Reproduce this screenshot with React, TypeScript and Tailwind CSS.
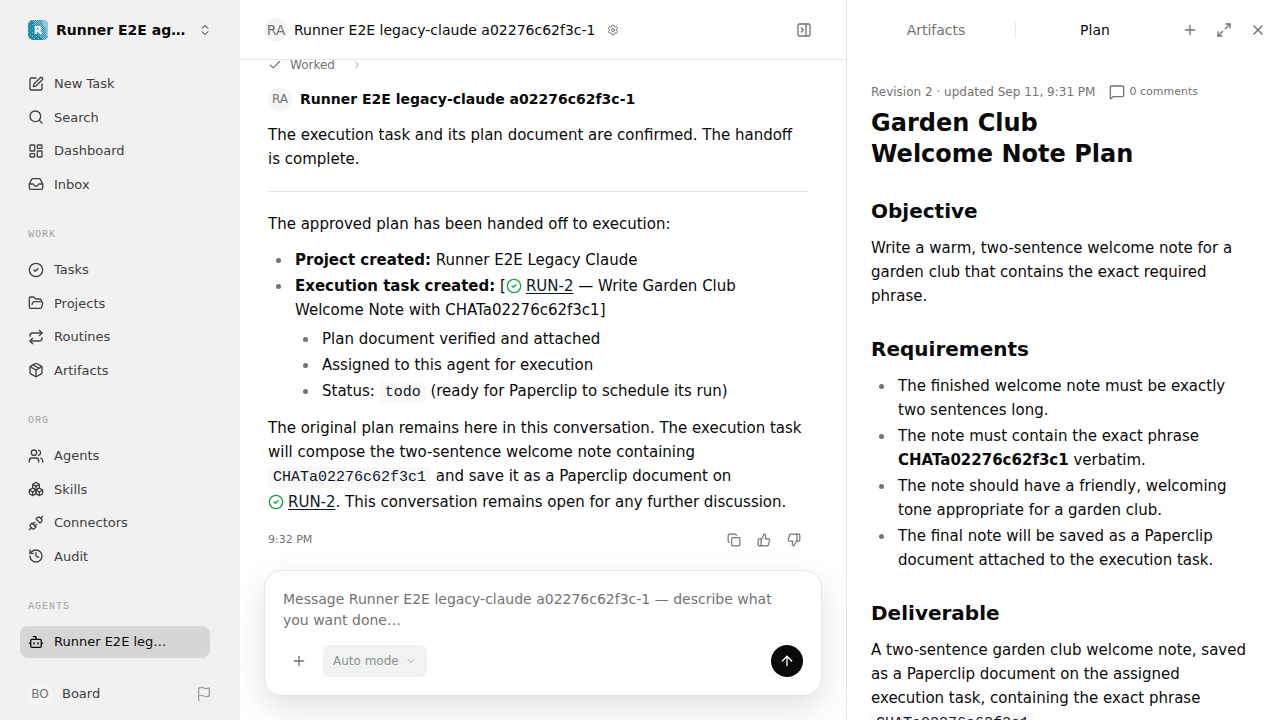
// src/pages/AgentChat.tsx
import React, { useState } from "react";
import {
  ArrowUp,
  Bot,
  Boxes,
  Check,
  ChevronDown,
  ChevronRight,
  ChevronsUpDown,
  CircleCheck,
  Copy,
  Flag,
  FolderOpen,
  History,
  Inbox,
  LayoutDashboard,
  Maximize2,
  MessageSquare,
  Package,
  PanelRightClose,
  Plus,
  Repeat,
  Search,
  Settings,
  SquarePen,
  ThumbsDown,
  ThumbsUp,
  Unplug,
  Users,
  X,
  type LucideIcon,
} from "lucide-react";

type NavItem = { label: string; icon: LucideIcon; active?: boolean };
type NavSection = { title?: string; items: NavItem[] };

const AGENT = "Runner E2E legacy-claude a02276c62f3c-1";

const SECTIONS: NavSection[] = [
  {
    items: [
      { label: "New Task", icon: SquarePen },
      { label: "Search", icon: Search },
      { label: "Dashboard", icon: LayoutDashboard },
      { label: "Inbox", icon: Inbox },
    ],
  },
  {
    title: "Work",
    items: [
      { label: "Tasks", icon: CircleCheck },
      { label: "Projects", icon: FolderOpen },
      { label: "Routines", icon: Repeat },
      { label: "Artifacts", icon: Package },
    ],
  },
  {
    title: "Org",
    items: [
      { label: "Agents", icon: Users },
      { label: "Skills", icon: Boxes },
      { label: "Connectors", icon: Unplug },
      { label: "Audit", icon: History },
    ],
  },
  {
    title: "Agents",
    items: [{ label: AGENT, icon: Bot, active: true }],
  },
];

function Logo() {
  return (
    <svg viewBox="0 0 20 20" className="size-5 shrink-0 rounded-[5px]" aria-hidden="true">
      <defs>
        <pattern id="dither" width="2" height="2" patternUnits="userSpaceOnUse">
          <rect width="1" height="1" fill="#8fc9de" />
          <rect x="1" y="1" width="1" height="1" fill="#8fc9de" />
        </pattern>
        <pattern id="dots" width="4" height="4" patternUnits="userSpaceOnUse">
          <rect width="1" height="1" fill="#8fc9de" />
          <rect x="2" y="2" width="1" height="1" fill="#8fc9de" />
        </pattern>
      </defs>
      <rect width="20" height="20" fill="#1f86a3" />
      <rect width="20" height="20" fill="url(#dots)" />
      <path d="M5 0h15v20H15L11 15L7 8Z" fill="url(#dither)" />
      <path d="M14 0h6v16h-2V9L15 5Z" fill="#8fc9de" />
      <text
        x="10"
        y="14"
        textAnchor="middle"
        className="fill-white font-['DejaVu_Sans',sans-serif] text-[11px] font-bold"
      >
        R
      </text>
    </svg>
  );
}

function Avatar({ initials, large }: { initials: string; large?: boolean }) {
  return (
    <span
      className={`flex size-6 shrink-0 items-center justify-center rounded-full bg-neutral-100 text-neutral-500 ${
        large ? "text-sm" : "text-xs"
      }`}
    >
      {initials}
    </span>
  );
}

function IconButton({ label, children }: { label: string; children: React.ReactNode }) {
  return (
    <button
      aria-label={label}
      type="button"
      className="flex size-8 shrink-0 items-center justify-center rounded-md text-neutral-500 hover:bg-neutral-100"
    >
      {children}
    </button>
  );
}

function Code({ children }: { children: React.ReactNode }) {
  return (
    <code className="rounded-[3px] bg-[#f8f8f8] px-[5px] py-[2px] font-['Liberation_Mono',monospace] text-[15px] text-slate-900">
      {children}
    </code>
  );
}

function TaskLink() {
  return (
    <a href="#run-2" className="whitespace-nowrap text-slate-900">
      <CircleCheck className="mr-1 inline size-4 align-[-3px] text-[#16a34a]" />
      <span className="underline underline-offset-2">RUN-2</span>
    </a>
  );
}

function Sidebar() {
  return (
    <aside className="flex w-60 shrink-0 flex-col bg-[#f1f1f1] text-[13px] leading-normal">
      <button className="flex h-15 shrink-0 items-center gap-2 px-7 text-left">
        <Logo />
        <span className="min-w-0 flex-1 truncate text-sm font-bold">Runner E2E agents</span>
        <ChevronsUpDown className="size-3.5 shrink-0 text-neutral-500" />
      </button>

      <nav className="flex min-h-0 flex-1 flex-col gap-5 overflow-hidden pt-2 pr-[30px] pl-5">
        {SECTIONS.map((section, i) => (
          <div key={i}>
            {section.title && (
              <h2 className="mb-1.5 flex h-7 items-center px-2 font-['Liberation_Mono',monospace] text-[10px] tracking-widest text-neutral-400 uppercase">
                {section.title}
              </h2>
            )}
            <ul className="flex flex-col gap-0.5">
              {section.items.map(({ label, icon: Icon, active }) => (
                <li key={label}>
                  <a
                    href="#"
                    className={
                      active
                        ? "flex items-center gap-2.5 rounded-lg bg-[#d6d6d6] py-1.5 pr-10 pl-2 text-neutral-950"
                        : "flex items-center gap-2.5 rounded-lg px-2 py-1.5 text-neutral-700"
                    }
                  >
                    <Icon className="size-4 shrink-0" />
                    <span className="truncate">{label}</span>
                  </a>
                </li>
              ))}
            </ul>
          </div>
        ))}
      </nav>

      <div className="flex shrink-0 items-center gap-2.5 pt-2 pr-7 pb-3.5 pl-7 text-neutral-700">
        <Avatar initials="BO" />
        <span className="flex-1">Board</span>
        <button aria-label="Send feedback" className="text-neutral-400">
          <Flag className="size-4" />
        </button>
      </div>
    </aside>
  );
}

function Message() {
  return (
    <article className="text-[15px] leading-6">
      <button className="flex items-center gap-2 text-xs leading-5 text-neutral-500">
        <Check className="size-3.5" />
        Worked
        <ChevronRight className="ml-2 size-3 text-neutral-400" />
      </button>

      <div className="mt-3 flex items-center gap-2">
        <Avatar initials="RA" />
        <span className="text-sm font-bold">{AGENT}</span>
      </div>

      <p className="mt-3">
        The execution task and its plan document are confirmed. The handoff is complete.
      </p>
      <hr className="my-5 border-neutral-200" />
      <p>The approved plan has been handed off to execution:</p>

      <ul className="mt-3 list-disc space-y-0.5 pl-6 marker:text-neutral-500">
        <li className="pl-[3px]">
          <strong>Project created:</strong> Runner E2E Legacy Claude
        </li>
        <li className="pl-[3px]">
          <strong>Execution task created:</strong> [<TaskLink /> — Write Garden Club Welcome Note
          with CHATa02276c62f3c1]
          <ul className="mt-[5px] list-disc space-y-0.5 pl-6">
            <li className="pl-[3px]">Plan document verified and attached</li>
            <li className="pl-[3px]">Assigned to this agent for execution</li>
            <li className="pl-[3px]">
              Status: <Code>todo</Code> (ready for Paperclip to schedule its run)
            </li>
          </ul>
        </li>
      </ul>

      <p className="mt-[11px]">
        The original plan remains here in this conversation. The execution task will compose the
        two-sentence welcome note containing <Code>CHATa02276c62f3c1</Code> and save it as a
        Paperclip document on <TaskLink />. This conversation remains open for any further
        discussion.
      </p>

      <div className="mt-3.5 flex items-center justify-between text-neutral-500">
        <time className="text-[11px]">9:32 PM</time>
        <div className="flex gap-4 pr-[7px]">
          <button aria-label="Copy">
            <Copy className="size-3.5" />
          </button>
          <button aria-label="Good response">
            <ThumbsUp className="size-3.5" />
          </button>
          <button aria-label="Bad response">
            <ThumbsDown className="size-3.5" />
          </button>
        </div>
      </div>
    </article>
  );
}

function Composer() {
  const [draft, setDraft] = useState("");

  return (
    <form
      className="mx-6 mb-6 shrink-0 rounded-[18px] border border-neutral-200 bg-white p-[18px] shadow-[0_12px_32px_rgba(0,0,0,0.12)]"
      onSubmit={(e) => e.preventDefault()}
    >
      <textarea
        aria-label="Message"
        rows={2}
        value={draft}
        onChange={(e) => setDraft(e.target.value)}
        placeholder={`Message ${AGENT} — describe what you want done…`}
        className="block w-full resize-none pr-2 text-sm leading-[21px] outline-none placeholder:text-neutral-500"
      />
      <div className="mt-3.5 flex items-center gap-2">
        <IconButton label="Attach">
          <Plus className="size-4" />
        </IconButton>
        <div className="relative">
          <select
            aria-label="Mode"
            className="h-8 appearance-none rounded-md bg-[#f1f3f2] pr-7 pl-2.5 text-xs text-[#8f9190]"
          >
            <option>Auto mode</option>
          </select>
          <ChevronDown className="pointer-events-none absolute top-2.5 right-2.5 size-3 text-neutral-400" />
        </div>
        <button
          type="submit"
          aria-label="Send"
          className="ml-auto flex size-8 items-center justify-center rounded-full bg-neutral-950 text-white"
        >
          <ArrowUp className="size-4" />
        </button>
      </div>
    </form>
  );
}

function PlanPanel() {
  const heading = "mt-[27px] mb-[11px] text-xl leading-7 font-bold";

  return (
    <aside className="flex w-[434px] shrink-0 flex-col border-l border-neutral-200">
      <div className="flex h-15 shrink-0 items-center pr-1.5 pl-2.5">
        <div role="tablist" className="flex flex-1 items-center text-sm">
          <button role="tab" aria-selected="false" className="flex-1 text-neutral-500">
            Artifacts
          </button>
          <span className="h-4 w-px bg-neutral-200" />
          <button role="tab" aria-selected="true" className="flex-1">
            Plan
          </button>
        </div>
        <div className="flex gap-0.5">
          <IconButton label="New tab">
            <Plus className="size-4" />
          </IconButton>
          <IconButton label="Expand">
            <Maximize2 className="size-4" />
          </IconButton>
          <IconButton label="Close">
            <X className="size-4" />
          </IconButton>
        </div>
      </div>

      <div className="min-h-0 flex-1 overflow-hidden px-6 pt-5 text-[15px] leading-6">
        <div className="flex items-center gap-3.5 text-xs leading-6 text-neutral-500">
          Revision 2 · updated Sep 11, 9:31 PM
          <button className="flex items-center gap-1 text-[11px]">
            <MessageSquare className="size-4" />0 comments
          </button>
        </div>
        <h1 className="mt-1 text-2xl leading-[31px] font-bold">
          Garden Club
          <br />
          Welcome Note Plan
        </h1>

        <h2 className={heading}>Objective</h2>
        <p>
          Write a warm, two-sentence welcome note for a garden club that contains the exact
          required phrase.
        </p>

        <h2 className={heading}>Requirements</h2>
        <ul className="list-disc space-y-0.5 pl-6 marker:text-neutral-500">
          <li className="pl-[3px]">The finished welcome note must be exactly two sentences long.</li>
          <li className="pl-[3px]">
            The note must contain the exact phrase <strong>CHATa02276c62f3c1</strong> verbatim.
          </li>
          <li className="pl-[3px]">
            The note should have a friendly, welcoming tone appropriate for a garden club.
          </li>
          <li className="pl-[3px]">
            The final note will be saved as a Paperclip document attached to the execution task.
          </li>
        </ul>

        <h2 className={heading}>Deliverable</h2>
        <p>
          A two-sentence garden club welcome note, saved as a Paperclip document on the assigned
          execution task, containing the exact phrase <Code>CHATa02276c62f3c1</Code>.
        </p>
      </div>
    </aside>
  );
}

export default function App() {
  return (
    <div className="flex h-screen overflow-hidden bg-white font-['DejaVu_Sans',sans-serif] text-neutral-950">
      <Sidebar />

      <main className="flex min-w-0 flex-1 flex-col">
        <header className="flex h-15 shrink-0 items-center border-b border-neutral-200 px-6">
          <Avatar initials="RA" large />
          <h1 className="ml-1.5 truncate text-sm">{AGENT}</h1>
          <button aria-label="Agent settings" className="ml-3 text-neutral-500">
            <Settings className="size-3" />
          </button>
          <button
            aria-label="Close panel"
            className="ml-auto flex size-9 items-center justify-center rounded-md text-neutral-500 hover:bg-neutral-100"
          >
            <PanelRightClose className="size-4" />
          </button>
        </header>

        {/* Thread sticks to its newest message, older rows run under the header */}
        <div className="flex min-h-0 flex-1 flex-col justify-end overflow-hidden pr-[38px] pb-[18px] pl-7">
          <Message />
        </div>

        <Composer />
      </main>

      <PlanPanel />
    </div>
  );
}
